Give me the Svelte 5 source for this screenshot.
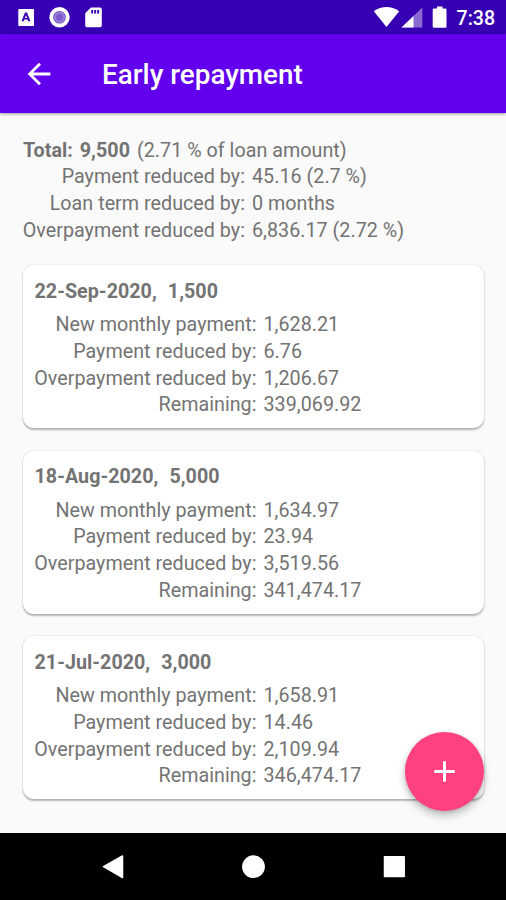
<script>
  const totals = [
    ['Payment reduced by:', '45.16 (2.7 %)'],
    ['Loan term reduced by:', '0 months'],
    ['Overpayment reduced by:', '6,836.17 (2.72 %)'],
  ];
  const labels = ['New monthly payment:', 'Payment reduced by:', 'Overpayment reduced by:', 'Remaining:'];
  const repayments = [
    { date: '22-Sep-2020,', amount: '1,500', values: ['1,628.21', '6.76', '1,206.67', '339,069.92'] },
    { date: '18-Aug-2020,', amount: '5,000', values: ['1,634.97', '23.94', '3,519.56', '341,474.17'] },
    { date: '21-Jul-2020,', amount: '3,000', values: ['1,658.91', '14.46', '2,109.94', '346,474.17'] },
  ];
</script>

<div class="screen">
  <header class="status">
    <svg class="left" width="104" height="34" viewBox="0 0 104 34" fill="#fff">
      <path fill-rule="evenodd" d="M19 9h14.5q.5 0 .5.5v16q0 .5-.5.5H19q-.7 0-.7-.7V9.700q0-.7.7-.7zM25 12.500 21.500 21.300h2.200l.6-1.700h3.300l.6 1.700h2.200L27 12.500zM26 15l1 2.900h-2.100z" />
      <circle cx="59.500" cy="17.300" r="10.200" />
      <circle cx="59.500" cy="17.300" r="6.300" fill="#6a45c6" />
      <circle cx="59.500" cy="17.300" r="5.500" fill="#9b80da" />
      <circle cx="59.500" cy="17.300" r="3.500" fill="#7b59cb" />
      <path fill-rule="evenodd" d="M91 7.500h9q1.800 0 1.800 1.800v16.200q0 1.800-1.800 1.800H87q-1.800 0-1.800-1.800V13.300zM91.200 10v3.500h1.900V10zM94.200 10v3.500h1.900V10zM97.200 10v3.500h1.900V10z" />
    </svg>
    <div class="right">
      <svg width="76" height="34" viewBox="0 0 76 34" fill="#fff">
        <path d="M.8 11.200Q13.500 3 26.200 11.200L13.500 27z" />
        <path d="M49.300 7.500V27.500H28.500z" opacity=".42" />
        <path d="M40.500 15.900V27.500H28.500z" />
        <path d="M64 6.600h5.500v1.900h2.700q1.300 0 1.300 1.300v16.700q0 1.300-1.300 1.300H61q-1.300 0-1.300-1.300V9.800q0-1.300 1.300-1.300h3z" />
      </svg>
      <time>7:38</time>
    </div>
  </header>

  <div class="appbar">
    <button class="back" aria-label="Back">
      <svg width="34" height="34" viewBox="0 0 24 24" fill="#fff"><path d="M20 11H7.830l5.590-5.590L12 4l-8 8 8 8 1.410-1.410L7.830 13H20v-2z" /></svg>
    </button>
    <h1>Early repayment</h1>
  </div>

  <main>
    <section class="summary">
      <p class="total"><b>Total:</b><b class="sum">9,500</b><span>(2.71 % of loan amount)</span></p>
      {#each totals as [label, value]}
        <div class="row"><span class="label">{label}</span><span class="value">{value}</span></div>
      {/each}
    </section>
    {#each repayments as item}
      <article>
        <h2><span>{item.date}</span><span>{item.amount}</span></h2>
        {#each labels as label, i}
          <div class="row"><span class="label">{label}</span><span class="value">{item.values[i]}</span></div>
        {/each}
      </article>
    {/each}
    <button class="fab" aria-label="Add repayment">
      <svg width="34" height="34" viewBox="0 0 24 24" fill="#fff"><path d="M19 13h-6v6h-2v-6H5v-2h6V5h2v6h6v2z" /></svg>
    </button>
  </main>

  <nav>
    <svg width="506" height="67" viewBox="0 0 506 67" fill="#fff" stroke="#fff" stroke-linejoin="round">
      <path d="M103.500 33.600 122.500 23v21.500z" stroke-width="1.500" />
      <circle cx="253.500" cy="33.700" r="11.400" stroke="none" />
      <path d="M384.500 23.800h19.700v19.700h-19.700z" stroke-width="1.500" />
    </svg>
  </nav>
</div>

<style>
  :global(body) { margin: 0; }
  .screen {
    width: 506px;
    height: 900px;
    display: flex;
    flex-direction: column;
    overflow: hidden;
    background: #fafafa;
    color: #737373;
    font: 400 19.700px/26.720px Roboto, sans-serif;
    letter-spacing: 0.030px;
  }
  button { border: 0; padding: 0; display: grid; place-items: center; }
  svg { display: block; }
  .status {
    height: 34px;
    flex: none;
    display: flex;
    justify-content: space-between;
    background: #3700b3;
    color: #fff;
  }
  .right { display: flex; width: 133px; }
  time { font-size: 19.600px; font-weight: 500; line-height: 37px; margin-left: 7.500px; letter-spacing: 0; }
  .appbar {
    height: 79px;
    flex: none;
    display: flex;
    align-items: center;
    background: #6200ee;
    color: #fff;
    box-shadow: 0 1px 3px rgba(0, 0, 0, 0.4);
    z-index: 1;
  }
  .back { width: 78px; height: 79px; background: none; }
  h1 { margin: 3px 0 0 24px; font-size: 27.850px; line-height: 34px; font-weight: 500; letter-spacing: 0; }
  main { position: relative; flex: 1; padding: 24.700px 22px 0 23px; }
  p, h2 { margin: 0; }
  .total { display: flex; }
  .total b { font-weight: 700; }
  .sum { margin: 0 7px; }
  .row { display: flex; gap: 7px; white-space: nowrap; }
  .label { width: 222px; flex: none; display: flex; justify-content: flex-end; }
  article {
    height: 163px;
    box-sizing: border-box;
    padding: 12.800px 11px 0 11.500px;
    background: #fff;
    border-radius: 11px;
    box-shadow: 0 1.500px 2px rgba(0, 0, 0, 0.28), 0 0 2px rgba(0, 0, 0, 0.1);
    margin-bottom: 22.600px;
  }
  .summary { margin-bottom: 20.400px; }
  h2 { display: flex; gap: 11px; font-size: 19.700px; line-height: 27px; font-weight: 700; margin-bottom: 7.400px; }
  .fab {
    position: absolute;
    right: 22px;
    bottom: 22.500px;
    width: 79px;
    height: 79px;
    border-radius: 50%;
    background: #ff4081;
    box-shadow: 0 5px 8px rgba(0, 0, 0, 0.22), 0 1px 4px rgba(0, 0, 0, 0.14);
  }
  .fab svg { width: 35px; height: 35px; }
  nav { height: 67px; flex: none; background: #000; }
</style>
